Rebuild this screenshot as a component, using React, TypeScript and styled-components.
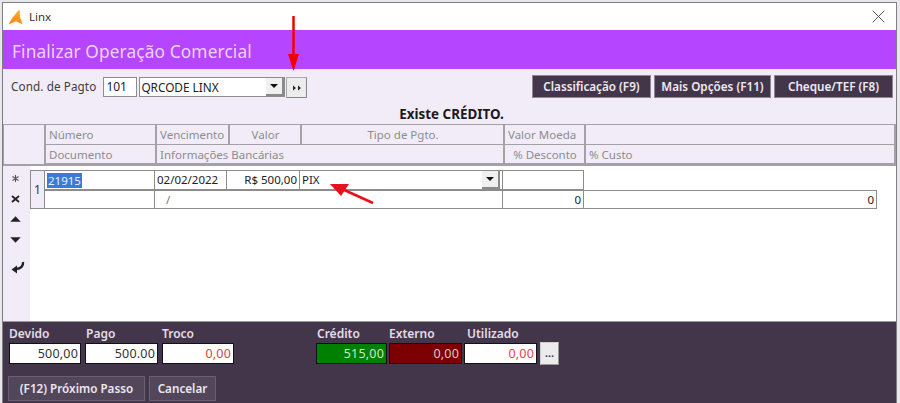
import React from 'react';
import styled, { createGlobalStyle } from 'styled-components';

const GlobalStyle = createGlobalStyle`
    html, body { margin: 0; padding: 0; background: #e9e6ec; }
    body { width: 900px; height: 403px; overflow: hidden; font-family: "Noto Sans", "Open Sans", sans-serif; }
`;

const Window = styled.div`
    position: relative;
    width: 895px;
    height: 401px;
    margin: 2px 0 0 2px;
    border: 1px solid #7f7f7f;
    border-bottom: none;
    box-sizing: border-box;
    display: flex;
    flex-direction: column;
    background: #f1ecf8;
`;

const TitleBar = styled.div`
    height: 27px;
    flex: none;
    box-sizing: border-box;
    background: #fff;
    display: flex;
    align-items: center;
    padding: 0 10px 0 5px;
    gap: 6px;
    font-size: 11.5px;
    color: #333;
`;

const CloseIcon = styled.svg`
    margin-left: auto;
    margin-right: 1px;
`;

const Banner = styled.div`
    height: 39px;
    flex: none;
    background: #b545ff;
    box-sizing: border-box;
    padding: 5px 0 0 9px;
    font-size: 17.3px;
    line-height: 33px;
    color: #ecd2fd;
    letter-spacing: 0.12px;
`;

const Toolbar = styled.div`
    height: 36px;
    flex: none;
    display: flex;
    align-items: flex-start;
    padding: 6px 3px 0 8px;
    box-sizing: border-box;
    font-size: 12px;
    color: #3d3d3d;
`;

const FieldLabel = styled.span`
    line-height: 22px;
    font-size: 11.7px;
    margin-right: 7px;
    letter-spacing: 0.1px;
`;

const CodeInput = styled.div`
    width: 34px;
    height: 20px;
    box-sizing: border-box;
    border: 1px solid #8c8c8c;
    background: #fff;
    padding-left: 2px;
    line-height: 17px;
    font-size: 12px;
    color: #222;
    margin-top: 2px;
    margin-right: 2px;
`;

const Combo = styled.div`
    width: 146px;
    height: 20px;
    box-sizing: border-box;
    border: 1px solid #8c8c8c;
    background: #fff;
    display: flex;
    align-items: center;
    justify-content: space-between;
    padding-left: 1px;
    line-height: 18px;
    font-size: 11.8px;
    color: #222;
    margin-top: 2px;
`;

const DropButton = styled.span`
    width: 18px;
    height: 18px;
    background: #f0f0f0;
    border-right: 2px solid #8a8a8a;
    border-bottom: 2px solid #8a8a8a;
    box-sizing: border-box;
    display: flex;
    align-items: center;
    justify-content: center;
    margin-left: auto;
`;

const ArrowDown = styled.span`
    width: 0;
    height: 0;
    border-left: 4px solid transparent;
    border-right: 4px solid transparent;
    border-top: 4px solid #111;
`;

const SkipButton = styled.div`
    width: 21px;
    height: 21px;
    box-sizing: border-box;
    margin: 2px 0 0 1px;
    background: #ececec;
    border: 1px solid #aaa;
    border-right-color: #888;
    border-bottom-color: #888;
    display: flex;
    align-items: center;
    justify-content: center;
`;

const ActionGroup = styled.div`
    margin-left: auto;
    display: flex;
    gap: 3px;
`;

const ActionButton = styled.div<{ $width: number }>`
    width: ${p => p.$width}px;
    height: 23px;
    box-sizing: border-box;
    background: #43364a;
    border: 1px solid #8e8791;
    color: #efeaf2;
    font-size: 11.7px;
    font-weight: 600;
    text-align: center;
    line-height: 21px;
    white-space: nowrap;
`;

const Notice = styled.div`
    height: 19px;
    flex: none;
    text-align: center;
    font-size: 13.4px;
    font-weight: 700;
    line-height: 18px;
    color: #1a1a1a;
    padding-left: 4px;
`;

const HeaderGrid = styled.div`
    height: 42px;
    flex: none;
    display: grid;
    grid-template-columns: 41px 111px 73px 72px 203px 81px 1fr;
    grid-template-rows: 20px 19px;
    border: 1px solid #a3a0a6;
    border-bottom-width: 2px;
    border-right-width: 2px;
    border-left: none;
    box-sizing: border-box;
`;

const HeaderCell = styled.div<{ $span?: number; $rows?: number; $center?: boolean }>`
    grid-column: span ${p => p.$span ?? 1};
    grid-row: span ${p => p.$rows ?? 1};
    box-sizing: border-box;
    border-left: 2px solid #a3a0a6;
    border-bottom: 1px solid #a3a0a6;
    padding: 0 2px 0 3px;
    font-size: 11.5px;
    line-height: 19px;
    color: #8d8d8d;
    white-space: nowrap;
    overflow: hidden;
    text-align: ${p => (p.$center ? 'center' : 'left')};
`;

const Corner = styled(HeaderCell)`
    border-left: 1px solid #a3a0a6;
    border-bottom: none;
`;

const Main = styled.div`
    flex: 1;
    min-height: 0;
    display: flex;
`;

const SideTools = styled.div`
    width: 27px;
    flex: none;
    display: flex;
    flex-direction: column;
    align-items: center;
    padding: 2px 0 0 0;
    box-sizing: border-box;
`;

const ToolSlot = styled.div<{ $height?: number }>`
    height: ${p => p.$height ?? 20.5}px;
    width: 100%;
    padding-right: 3px;
    box-sizing: border-box;
    display: flex;
    align-items: center;
    justify-content: center;
    color: #222;
`;

const Body = styled.div`
    flex: 1;
    background: #fff;
    padding-top: 4px;
`;

const Rows = styled.div`
    width: 847px;
    display: grid;
    grid-template-columns: 15px 110px 72px 73px 203px 81px 293px;
    grid-template-rows: 20px 19px;
`;

const RowIndex = styled.div`
    grid-row: span 2;
    background: #f1ecf8;
    border: 1px solid #8c8c8c;
    box-sizing: border-box;
    font-size: 12px;
    color: #333;
    display: flex;
    align-items: center;
    justify-content: center;
`;

const Cell = styled.div<{ $span?: number; $right?: boolean }>`
    grid-column: span ${p => p.$span ?? 1};
    box-sizing: border-box;
    border: 1px solid #8c8c8c;
    border-left-width: 0;
    background: #fff;
    font-size: 11.5px;
    line-height: 18px;
    color: #222;
    padding: 0 2px;
    display: flex;
    align-items: center;
    justify-content: ${p => (p.$right ? 'flex-end' : 'flex-start')};
    white-space: nowrap;
    overflow: hidden;
`;

const Selected = styled.span`
    background: #3a7bd5;
    color: #e8f0fb;
    line-height: 15px;
    padding: 0 1px;
`;

const BankSlash = styled.span`
    margin-left: 9px;
    color: #777;
`;

const Footer = styled.div`
    height: 82px;
    flex: none;
    background: #43364a;
    border-top: 1px solid #9c96a0;
    box-sizing: border-box;
    padding: 3px 5px 0 6px;
    display: flex;
    flex-direction: column;
`;

const Totals = styled.div`
    display: flex;
    align-items: flex-start;
`;

const TotalsGroup = styled.div<{ $gap?: number; $spacing: number }>`
    display: flex;
    gap: ${p => p.$spacing}px;
    margin-left: ${p => p.$gap ?? 0}px;
`;

const TotalField = styled.div<{ $width: number }>`
    width: ${p => p.$width}px;
    display: flex;
    flex-direction: column;
`;

const TotalLabel = styled.span<{ $indent?: number }>`
    font-size: 12px;
    font-weight: 600;
    line-height: 18px;
    color: #e3dde7;
    white-space: nowrap;
    padding-left: ${p => p.$indent ?? 0}px;
`;

const TOTAL_BG = { white: '#fff', green: '#008000', maroon: '#7c0000' };

const TotalValue = styled.div<{ $bg: keyof typeof TOTAL_BG; $color: string }>`
    height: 21px;
    box-sizing: border-box;
    border: 1px solid #14101a;
    background: ${p => TOTAL_BG[p.$bg]};
    color: ${p => p.$color};
    font-size: 12.5px;
    line-height: 19px;
    text-align: right;
    padding-right: 2px;
    letter-spacing: 0.2px;
`;

const MoreButton = styled.div`
    width: 19px;
    height: 23px;
    box-sizing: border-box;
    margin: 17px 0 0 3px;
    background: #ececec;
    border: 1px solid #cfcfcf;
    border-right-color: #999;
    border-bottom-color: #999;
    color: #333;
    font-size: 11px;
    font-weight: 600;
    text-align: center;
    line-height: 20px;
`;

const FooterActions = styled.div`
    display: flex;
    gap: 4px;
    margin: 11px 0 0 -1px;
`;

const FooterButton = styled.div<{ $width: number }>`
    width: ${p => p.$width}px;
    height: 25px;
    box-sizing: border-box;
    background: #52465a;
    border: 1px solid #6a5f70;
    color: #ece7ef;
    font-size: 11.7px;
    font-weight: 600;
    text-align: center;
    line-height: 23px;
`;

const Marker = styled.svg`
    position: absolute;
    left: -3px;
    top: -3px;
    pointer-events: none;
`;

// bolt logo, yellow on top and orange towards the feet
const Logo = () => (
    <svg width="15" height="16" viewBox="0 0 15 16">
        <defs>
            <linearGradient id="logoFill" x1="0" y1="0" x2="0" y2="1">
                <stop offset="0" stopColor="#eeb61e" />
                <stop offset="0.55" stopColor="#fb9a1c" />
                <stop offset="1" stopColor="#f9801e" />
            </linearGradient>
        </defs>
        <path d="M11.5 0.3 L12 8 L14.5 15.2 L8 12.2 L0.4 15.6 L4.6 8.6 Z" fill="url(#logoFill)" />
    </svg>
);

const Skip = () => (
    <svg width="10" height="6" viewBox="0 0 10 6">
        <path d="M1 0.5 L4 3 L1 5.5 Z M6 0.5 L9 3 L6 5.5 Z" fill="#222" />
    </svg>
);

const Up = () => (
    <svg width="11" height="6" viewBox="0 0 11 6"><path d="M5.5 0.3 L10.7 5.7 L0.3 5.7 Z" fill="#222" /></svg>
);

const Down = () => (
    <svg width="11" height="6" viewBox="0 0 11 6"><path d="M0.3 0.3 L10.7 0.3 L5.5 5.7 Z" fill="#222" /></svg>
);

const Cross = () => (
    <svg width="9" height="8" viewBox="0 0 9 8">
        <path d="M1 1 L8 7 M8 1 L1 7" stroke="#222" strokeWidth="1.8" />
    </svg>
);

const Star = () => (
    <svg width="7" height="7" viewBox="0 0 7 7">
        <path d="M3.5 0 V7 M0.5 1.5 L6.5 5.5 M6.5 1.5 L0.5 5.5" stroke="#555" strokeWidth="1.1" />
    </svg>
);

const EnterIcon = () => (
    <svg width="19" height="16" viewBox="0 0 19 16">
        <path d="M17 3 C17.5 7 15 9.5 10 10" fill="none" stroke="#222" strokeWidth="2.4" />
        <path d="M5.5 10.5 L11 6.5 L11 14.5 Z" fill="#222" />
    </svg>
);

export default function App() {
    return (
        <>
            <GlobalStyle />
            <Window>
                <TitleBar>
                    <Logo />
                    <span>Linx</span>
                    <CloseIcon width="13" height="13" viewBox="0 0 13 13">
                        <path d="M0.7 0.7 L12.3 12.3 M12.3 0.7 L0.7 12.3" stroke="#555" strokeWidth="1" />
                    </CloseIcon>
                </TitleBar>
                <Banner>Finalizar Operação Comercial</Banner>
                <Toolbar>
                    <FieldLabel>Cond. de Pagto</FieldLabel>
                    <CodeInput>101</CodeInput>
                    <Combo>
                        QRCODE LINX
                        <DropButton><ArrowDown /></DropButton>
                    </Combo>
                    <SkipButton><Skip /></SkipButton>
                    <ActionGroup>
                        <ActionButton $width={119}>Classificação (F9)</ActionButton>
                        <ActionButton $width={117}>Mais Opções (F11)</ActionButton>
                        <ActionButton $width={119}>Cheque/TEF (F8)</ActionButton>
                    </ActionGroup>
                </Toolbar>
                <Notice>Existe CRÉDITO.</Notice>
                <HeaderGrid>
                    <Corner $rows={2} />
                    <HeaderCell>Número</HeaderCell>
                    <HeaderCell>Vencimento</HeaderCell>
                    <HeaderCell $center>Valor</HeaderCell>
                    <HeaderCell $center>Tipo de Pgto.</HeaderCell>
                    <HeaderCell>Valor Moeda</HeaderCell>
                    <HeaderCell />
                    <HeaderCell>Documento</HeaderCell>
                    <HeaderCell $span={3}>Informações Bancárias</HeaderCell>
                    <HeaderCell $center>% Desconto</HeaderCell>
                    <HeaderCell>% Custo</HeaderCell>
                </HeaderGrid>
                <Main>
                    <SideTools>
                        <ToolSlot><Star /></ToolSlot>
                        <ToolSlot><Cross /></ToolSlot>
                        <ToolSlot><Up /></ToolSlot>
                        <ToolSlot><Down /></ToolSlot>
                        <ToolSlot $height={34}><EnterIcon /></ToolSlot>
                    </SideTools>
                    <Body>
                        <Rows>
                            <RowIndex>1</RowIndex>
                            <Cell><Selected>21915</Selected></Cell>
                            <Cell>02/02/2022</Cell>
                            <Cell $right>R$ 500,00</Cell>
                            <Cell>
                                PIX
                                <DropButton><ArrowDown /></DropButton>
                            </Cell>
                            <Cell />
                            <span />
                            <Cell />
                            <Cell $span={3}><BankSlash>/</BankSlash></Cell>
                            <Cell $right>0</Cell>
                            <Cell $right>0</Cell>
                        </Rows>
                    </Body>
                </Main>
                <Footer>
                    <Totals>
                        <TotalsGroup $spacing={4}>
                            <TotalField $width={72}>
                                <TotalLabel>Devido</TotalLabel>
                                <TotalValue $bg="white" $color="#333">500,00</TotalValue>
                            </TotalField>
                            <TotalField $width={73}>
                                <TotalLabel $indent={1}>Pago</TotalLabel>
                                <TotalValue $bg="white" $color="#333">500.00</TotalValue>
                            </TotalField>
                            <TotalField $width={72}>
                                <TotalLabel>Troco</TotalLabel>
                                <TotalValue $bg="white" $color="#e04040">0,00</TotalValue>
                            </TotalField>
                        </TotalsGroup>
                        <TotalsGroup $gap={82} $spacing={2}>
                            <TotalField $width={71}>
                                <TotalLabel $indent={1}>Crédito</TotalLabel>
                                <TotalValue $bg="green" $color="#c8e8c8">515,00</TotalValue>
                            </TotalField>
                            <TotalField $width={73}>
                                <TotalLabel>Externo</TotalLabel>
                                <TotalValue $bg="maroon" $color="#e6c4c4">0,00</TotalValue>
                            </TotalField>
                            <TotalField $width={73}>
                                <TotalLabel $indent={3}>Utilizado</TotalLabel>
                                <TotalValue $bg="white" $color="#f03a4a">0,00</TotalValue>
                            </TotalField>
                        </TotalsGroup>
                        <MoreButton>...</MoreButton>
                    </Totals>
                    <FooterActions>
                        <FooterButton $width={137}>(F12) Próximo Passo</FooterButton>
                        <FooterButton $width={67}>Cancelar</FooterButton>
                    </FooterActions>
                </Footer>
                <Marker width="900" height="403" viewBox="0 0 900 403">
                    <path d="M293.5 16 V56" stroke="#f00000" strokeWidth="2.5" />
                    <path d="M288 54 L299 54 L293.5 71 Z" fill="#f00000" />
                    <path d="M373 203 L342 189" stroke="#e8101c" strokeWidth="2.5" />
                    <path d="M330 184 L349 184 L341 196 Z" fill="#e8101c" />
                </Marker>
            </Window>
        </>
    );
}
